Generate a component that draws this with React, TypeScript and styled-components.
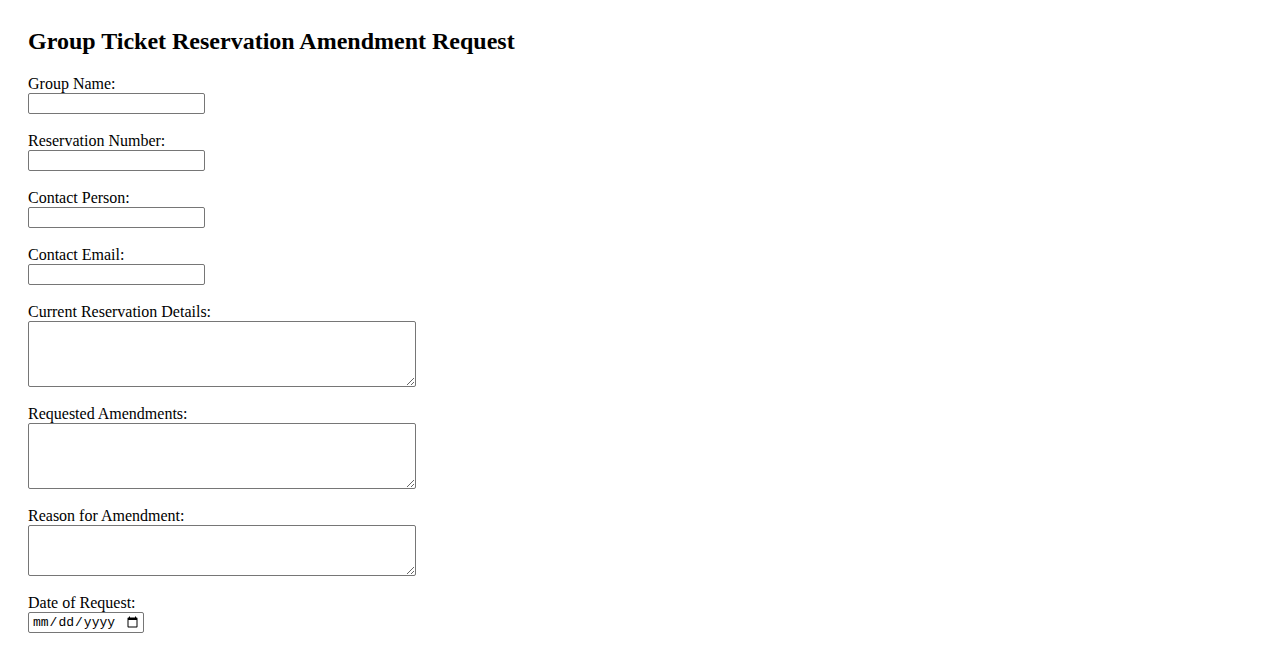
import React from "react";
import styled, { createGlobalStyle } from "styled-components";

const GlobalStyle = createGlobalStyle`
  html, body {
    margin: 0;
    padding: 0;
    background: #ffffff;
  }
  body {
    font-family: "Liberation Serif", "Times New Roman", serif;
    color: #000000;
  }
`;

const Page = styled.div`
  display: flow-root;
  padding: 8px 28px;
`;

const Title = styled.h2`
  font-family: "Liberation Serif", "Times New Roman", serif;
  font-size: 24px;
  font-weight: bold;
  line-height: 27px;
  margin: 20px 0 20px;
`;

const Form = styled.form`
  display: flex;
  flex-direction: column;
  align-items: flex-start;
  gap: 18px;
`;

const Field = styled.div`
  display: flex;
  flex-direction: column;
  align-items: flex-start;
`;

const Label = styled.label`
  font-size: 16px;
  line-height: 18px;
`;

const TextInput = styled.input`
  box-sizing: border-box;
  width: 177px;
  height: 21px;
  margin: 0;
  padding: 1px 2px;
  border: 1px solid #767676;
  border-radius: 2px;
  font-family: "Liberation Sans", Arial, sans-serif;
  font-size: 13px;
  background: #ffffff;
`;

const DateInput = styled(TextInput)`
  width: 116px;
  font-family: "Liberation Mono", "Courier New", monospace;
  font-size: 13px;
  padding: 1px 2px 1px 3px;
  color: #000;
`;

const TextArea = styled.textarea<{ $h: number }>`
  box-sizing: border-box;
  width: 388px;
  height: ${(p) => p.$h}px;
  margin: 0;
  padding: 2px;
  border: 1px solid #767676;
  border-radius: 2px;
  font-family: "Liberation Mono", "Courier New", monospace;
  font-size: 13px;
  background: #ffffff;
  display: block;
`;

export default function App() {
  return (
    <>
      <GlobalStyle />
      <Page>
        <Title>Group Ticket Reservation Amendment Request</Title>
        <Form onSubmit={(e) => e.preventDefault()}>
          <Field>
            <Label htmlFor="groupName">Group Name:</Label>
            <TextInput id="groupName" type="text" />
          </Field>
          <Field>
            <Label htmlFor="resNum">Reservation Number:</Label>
            <TextInput id="resNum" type="text" />
          </Field>
          <Field>
            <Label htmlFor="contact">Contact Person:</Label>
            <TextInput id="contact" type="text" />
          </Field>
          <Field>
            <Label htmlFor="email">Contact Email:</Label>
            <TextInput id="email" type="email" />
          </Field>
          <Field>
            <Label htmlFor="current">Current Reservation Details:</Label>
            <TextArea id="current" $h={66} />
          </Field>
          <Field>
            <Label htmlFor="requested">Requested Amendments:</Label>
            <TextArea id="requested" $h={66} />
          </Field>
          <Field>
            <Label htmlFor="reason">Reason for Amendment:</Label>
            <TextArea id="reason" $h={51} />
          </Field>
          <Field>
            <Label htmlFor="date">Date of Request:</Label>
            <DateInput id="date" type="date" />
          </Field>
        </Form>
      </Page>
    </>
  );
}
